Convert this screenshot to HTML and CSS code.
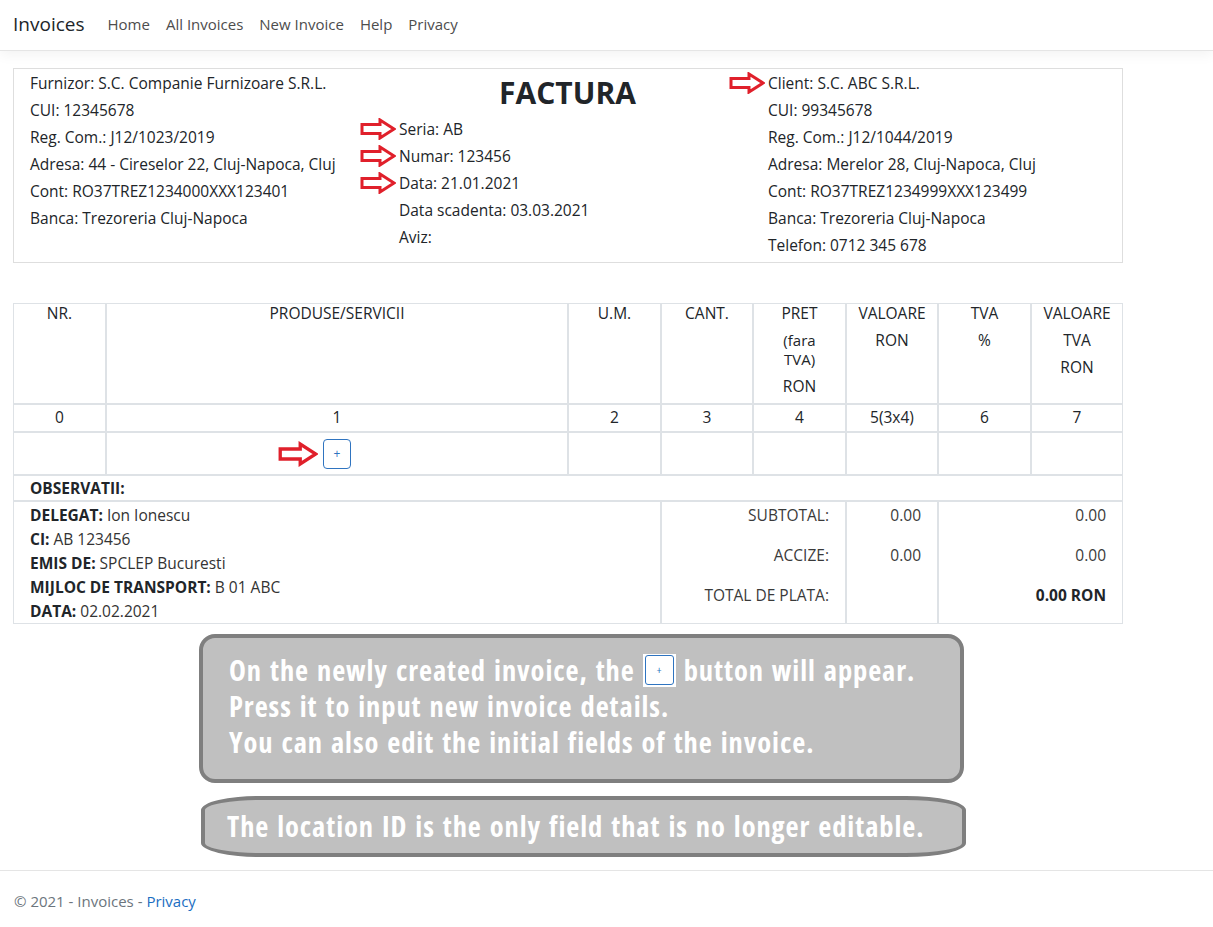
FILE: index.html
```html
<!DOCTYPE html>
<html lang="ro">
<head>
<meta charset="utf-8">
<title>Invoices</title>
<link rel="stylesheet" href="styles.css">
</head>
<body>
<header class="navbar">
  <a class="brand" href="#">Invoices</a>
  <nav class="nav-links">
    <a href="#">Home</a>
    <a href="#">All Invoices</a>
    <a href="#">New Invoice</a>
    <a href="#">Help</a>
    <a href="#">Privacy</a>
  </nav>
</header>

<main class="page">
  <section class="inv-head">
    <div class="col col-left">
      <p>Furnizor: S.C. Companie Furnizoare S.R.L.</p>
      <p>CUI: 12345678</p>
      <p>Reg. Com.: J12/1023/2019</p>
      <p>Adresa: 44 - Cireselor 22, Cluj-Napoca, Cluj</p>
      <p>Cont: RO37TREZ1234000XXX123401</p>
      <p>Banca: Trezoreria Cluj-Napoca</p>
    </div>
    <div class="col col-mid">
      <h1 class="title">FACTURA</h1>
      <p class="arrowed"><svg class="arrow" viewBox="0 0 36 22"><path d="M2 6.5H20V2L34 11L20 20V15.5H2Z"/></svg>Seria: AB</p>
      <p class="arrowed"><svg class="arrow" viewBox="0 0 36 22"><path d="M2 6.5H20V2L34 11L20 20V15.5H2Z"/></svg>Numar: 123456</p>
      <p class="arrowed"><svg class="arrow" viewBox="0 0 36 22"><path d="M2 6.5H20V2L34 11L20 20V15.5H2Z"/></svg>Data: 21.01.2021</p>
      <p>Data scadenta: 03.03.2021</p>
      <p>Aviz:</p>
    </div>
    <div class="col col-right">
      <p class="arrowed"><svg class="arrow" viewBox="0 0 36 22"><path d="M2 6.5H20V2L34 11L20 20V15.5H2Z"/></svg>Client: S.C. ABC S.R.L.</p>
      <p>CUI: 99345678</p>
      <p>Reg. Com.: J12/1044/2019</p>
      <p>Adresa: Merelor 28, Cluj-Napoca, Cluj</p>
      <p>Cont: RO37TREZ1234999XXX123499</p>
      <p>Banca: Trezoreria Cluj-Napoca</p>
      <p>Telefon: 0712 345 678</p>
    </div>
  </section>

  <table class="items">
    <colgroup>
      <col class="w93"><col class="w462"><col class="w93"><col class="w92"><col class="w93"><col class="w92"><col class="w93"><col class="w92">
    </colgroup>
    <thead>
      <tr class="head-row">
        <th><p>NR.</p></th>
        <th><p>PRODUSE/SERVICII</p></th>
        <th><p>U.M.</p></th>
        <th><p>CANT.</p></th>
        <th><p>PRET</p><p class="tight">(fara<br>TVA)</p><p>RON</p></th>
        <th><p>VALOARE</p><p>RON</p></th>
        <th><p>TVA</p><p>%</p></th>
        <th><p>VALOARE</p><p>TVA</p><p>RON</p></th>
      </tr>
      <tr class="num-row">
        <td>0</td><td>1</td><td>2</td><td>3</td><td>4</td><td>5(3x4)</td><td>6</td><td>7</td>
      </tr>
    </thead>
    <tbody>
      <tr class="add-row">
        <td></td>
        <td><span class="add-wrap"><svg class="arrow arrow-lg" viewBox="0 0 36 22"><path d="M2 6.5H20V2L34 11L20 20V15.5H2Z"/></svg><button class="btn-add" type="button">+</button></span></td>
        <td></td><td></td><td></td><td></td><td></td><td></td>
      </tr>
      <tr class="obs-row">
        <td colspan="8"><b>OBSERVATII:</b></td>
      </tr>
      <tr class="foot-row">
        <td colspan="3" class="delegate">
          <p><b>DELEGAT:</b> Ion Ionescu</p>
          <p><b>CI:</b> AB 123456</p>
          <p><b>EMIS DE:</b> SPCLEP Bucuresti</p>
          <p><b>MIJLOC DE TRANSPORT:</b> B 01 ABC</p>
          <p><b>DATA:</b> 02.02.2021</p>
        </td>
        <td colspan="2" class="totals">
          <p>SUBTOTAL:</p>
          <p>ACCIZE:</p>
          <p>TOTAL DE PLATA:</p>
        </td>
        <td class="totals">
          <p>0.00</p>
          <p>0.00</p>
        </td>
        <td colspan="2" class="totals">
          <p>0.00</p>
          <p>0.00</p>
          <p><b>0.00 RON</b></p>
        </td>
      </tr>
    </tbody>
  </table>

  <div class="callouts">
    <div class="callout callout-main">
      <p>On the newly created invoice, the <span class="mini-btn"><span class="mini-btn-inner">+</span></span> button will appear.</p>
      <p>Press it to input new invoice details.</p>
      <p>You can also edit the initial fields of the invoice.</p>
    </div>
    <div class="callout callout-pill">
      <p>The location ID is the only field that is no longer editable.</p>
    </div>
  </div>
</main>

<footer class="footer">
  &copy; 2021 - Invoices - <a href="#">Privacy</a>
</footer>
</body>
</html>
```
FILE: styles.css
```css
* { box-sizing: border-box; }

body {
  margin: 0;
  font-family: "Open Sans", "Noto Sans", sans-serif;
  font-size: 15.5px;
  color: #212529;
  background: #fff;
}

a { text-decoration: none; }

/* navbar */
.navbar {
  display: flex;
  align-items: center;
  height: 51px;
  padding: 0 13px;
  border-bottom: 1px solid #e5e5e5;
  box-shadow: 0 4px 12px rgba(0, 0, 0, 0.05);
}
.brand {
  font-size: 19px;
  color: #212529;
  margin-right: 16px;
  padding-bottom: 3px;
}
.nav-links {
  display: flex;
  padding-bottom: 3px;
  margin-left: -1px;
}
.nav-links a {
  padding: 0 8px;
  color: #4d4d4d;
  font-size: 15px;
}

/* page */
.page {
  padding: 0 13px;
}

/* invoice head */
.inv-head {
  width: 1110px;
  margin-top: 17px;
  border: 1px solid #dedede;
  display: grid;
  grid-template-columns: 370px 370px 368px;
  padding: 1px 0 3px;
}
.inv-head p {
  margin: 0;
  line-height: 27px;
  white-space: nowrap;
}
.col-left { padding-left: 16px; }
.col-mid { padding-left: 15px; }
.col-right { padding-left: 14px; }
.title {
  margin: 0;
  text-align: center;
  font-size: 30px;
  font-weight: 700;
  line-height: 46px;
  padding-right: 18px;
}
.arrowed { position: relative; }
.arrow {
  position: absolute;
  width: 36px;
  height: 22px;
  left: -39px;
  top: 2px;
}
.arrow path {
  fill: #fff;
  stroke: #e0202b;
  stroke-width: 3;
  stroke-linejoin: miter;
}

/* table */
.items {
  width: 1110px;
  margin-top: 40px;
  table-layout: fixed;
  border-collapse: separate;
  border-spacing: 0;
}
.w93 { width: 93px; }
.w92 { width: 92px; }
.w462 { width: 462px; }
.items th, .items td {
  border: 1px solid #dee2e6;
  padding: 0;
}
.items th {
  font-weight: 400;
  text-align: center;
  vertical-align: top;
}
.items th p {
  margin: 0 0 8px;
  line-height: 19px;
  white-space: nowrap;
}
.items th p.tight {
  font-size: 15px;
}
.items th p:last-child { margin-bottom: 7px; }
.num-row td {
  text-align: center;
  padding: 3px 0 4px;
  line-height: 19px;
}
.add-row td {
  height: 43px;
  text-align: center;
  vertical-align: middle;
}
.add-wrap {
  position: relative;
  display: inline-block;
  vertical-align: middle;
}
.arrow-lg {
  width: 40px;
  height: 26px;
  left: -45px;
  top: 2px;
}
.btn-add {
  display: block;
  width: 28px;
  height: 30px;
  padding: 0;
  background: #fff;
  border: 1px solid #2f74c0;
  border-radius: 4px;
  color: #2f74c0;
  font-family: "Open Sans", sans-serif;
  font-size: 12px;
  line-height: 28px;
}
.obs-row td {
  padding: 0 16px;
  line-height: 24px;
}
.obs-row b, .delegate b, .totals b { font-weight: 700; }
.foot-row td {
  vertical-align: top;
}
.delegate {
  padding: 1px 16px 0 !important;
}
.delegate p {
  margin: 0;
  line-height: 24px;
  color: #333;
}
.delegate p b { color: #212529; }
.totals {
  text-align: right;
  padding: 1px 16px 0 !important;
}
.totals p {
  margin: 0 0 16px;
  line-height: 24px;
  color: #3a3a3a;
}
.totals p b { color: #212529; }

/* callouts */
.callouts {
  display: flex;
  flex-direction: column;
  margin-top: 10px;
}
.callout {
  background: #c0c0c0;
  border: 4px solid #7f7f7f;
  color: #fff;
  font-family: "Open Sans", sans-serif;
  font-stretch: 75%;
  font-weight: 700;
  font-size: 28.5px;
  letter-spacing: 0.9px;
  word-spacing: 2px;
}
.callout p { margin: 0; white-space: nowrap; }
.callout-main {
  margin-left: 186px;
  width: 765px;
  border-radius: 16px;
  padding: 14px 20px 19px 26px;
  line-height: 36px;
}
.mini-btn {
  display: inline-block;
  vertical-align: middle;
  width: 33px;
  height: 33px;
  background: #fff;
  padding: 1px 2px 2px;
  margin-top: -6px;
  letter-spacing: 0;
}
.mini-btn-inner {
  display: block;
  height: 100%;
  border: 1px solid #2f74c0;
  border-radius: 3px;
  color: #2f74c0;
  font-size: 11px;
  font-weight: 400;
  line-height: 28px;
  text-align: center;
}
.callout-pill {
  margin-top: 13px;
  margin-left: 188px;
  width: 765px;
  height: 61px;
  border-radius: 60px / 14px;
  padding: 0 20px 0 22px;
  line-height: 53px;
}

/* footer */
.footer {
  margin-top: 13px;
  border-top: 1px solid #e5e5e5;
  line-height: 60px;
  padding-left: 14px;
  color: #6c757d;
  font-size: 15px;
}
.footer a { color: #1b6ec2; }
```
